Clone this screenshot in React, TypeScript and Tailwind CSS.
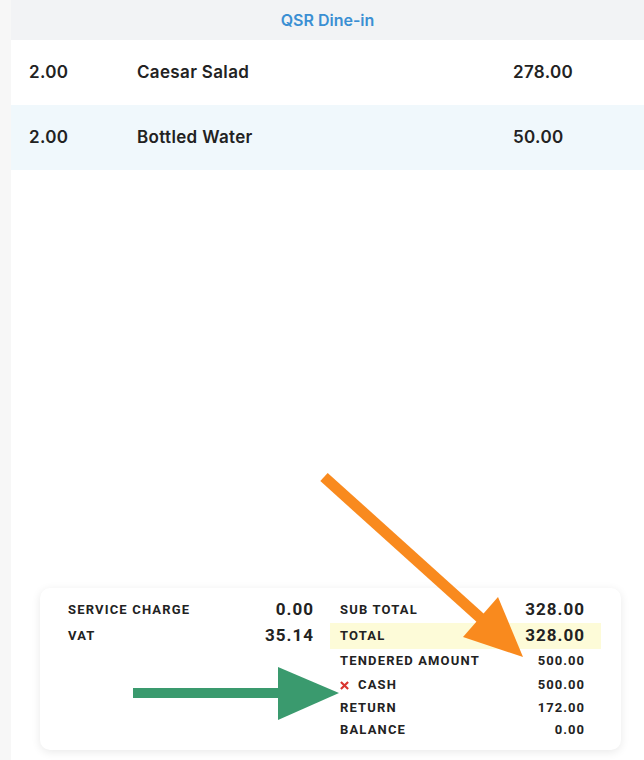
const items = [
  { qty: "2.00", name: "Caesar Salad", price: "278.00", bg: "bg-white" },
  { qty: "2.00", name: "Bottled Water", price: "50.00", bg: "bg-[#f0f8fc]" },
];

function Label({ children }: { children: React.ReactNode }) {
  return <span className="text-[13px] font-bold tracking-[0.09em] text-[#222]">{children}</span>;
}

export default function App() {
  return (
    <div className="relative flex h-[760px] w-[644px] bg-[#f7f7f7] pl-[11px]">
      <div className="flex flex-1 flex-col bg-white">
        <div className="flex h-[40px] items-center justify-center bg-[#f2f3f5] font-['Inter',sans-serif] text-[16px] font-semibold text-[#3b8fd3]">
          QSR Dine-in
        </div>
        {items.map((it) => (
          <div
            key={it.name}
            className={`flex h-[65px] items-center pl-[18px] font-['Inter',sans-serif] text-[17px] font-semibold tracking-[0.02em] text-[#222] ${it.bg}`}
          >
            <span className="w-[108px]">{it.qty}</span>
            <span className="w-[376px]">{it.name}</span>
            <span>{it.price}</span>
          </div>
        ))}
        <div className="flex-1" />
        <div className="mb-[10px] ml-[29px] mr-[23px] rounded-[10px] bg-white pb-[9px] pl-[28px] pr-[20px] pt-[9px] font-['Roboto',sans-serif] text-[#222] shadow-[0_2px_10px_rgba(0,0,0,0.09)]">
          <div className="flex gap-[16px]">
            <div className="flex w-[246px] flex-col">
              <div className="flex h-[26px] items-center justify-between">
                <Label>SERVICE CHARGE</Label>
                <span className="text-[17px] font-bold tracking-[0.06em]">0.00</span>
              </div>
              <div className="flex h-[26px] items-center justify-between">
                <Label>VAT</Label>
                <span className="text-[17px] font-bold tracking-[0.06em]">35.14</span>
              </div>
            </div>
            <div className="flex flex-1 flex-col">
              <div className="flex h-[26px] items-center justify-between pl-[10px] pr-[16px]">
                <Label>SUB TOTAL</Label>
                <span className="text-[17px] font-bold tracking-[0.06em]">328.00</span>
              </div>
              <div className="flex h-[26px] items-center justify-between bg-[#fdfbd8] pl-[10px] pr-[16px]">
                <Label>TOTAL</Label>
                <span className="text-[17px] font-bold tracking-[0.06em]">328.00</span>
              </div>
              <div className="flex h-[24px] items-center justify-between pl-[10px] pr-[16px]">
                <Label>TENDERED AMOUNT</Label>
                <span className="text-[13px] font-bold tracking-[0.08em]">500.00</span>
              </div>
              <div className="flex h-[24px] items-center justify-between pl-[10px] pr-[16px]">
                <span className="flex items-center gap-[9px]">
                  <svg width="9" height="9" viewBox="0 0 10 10" className="text-[#d9352f]">
                    <path d="M1 1l8 8M9 1L1 9" stroke="currentColor" strokeWidth="2.4" />
                  </svg>
                  <Label>CASH</Label>
                </span>
                <span className="text-[13px] font-bold tracking-[0.08em]">500.00</span>
              </div>
              <div className="flex h-[22px] items-center justify-between pl-[10px] pr-[16px]">
                <Label>RETURN</Label>
                <span className="text-[13px] font-bold tracking-[0.08em]">172.00</span>
              </div>
              <div className="flex h-[22px] items-center justify-between pl-[10px] pr-[16px]">
                <Label>BALANCE</Label>
                <span className="text-[13px] font-bold tracking-[0.08em]">0.00</span>
              </div>
            </div>
          </div>
        </div>
      </div>

      {/* annotation arrows */}
      <svg className="pointer-events-none absolute inset-0" width="644" height="760" viewBox="0 0 644 760">
        <line x1="324" y1="477" x2="486" y2="623" stroke="#f98a1e" strokeWidth="11" />
        <polygon points="498,597 463,637 523,657" fill="#f98a1e" />
        <rect x="133" y="688" width="147" height="10" fill="#3a9a6e" />
        <polygon points="278,667 278,720 339,693" fill="#3a9a6e" />
      </svg>
    </div>
  );
}
